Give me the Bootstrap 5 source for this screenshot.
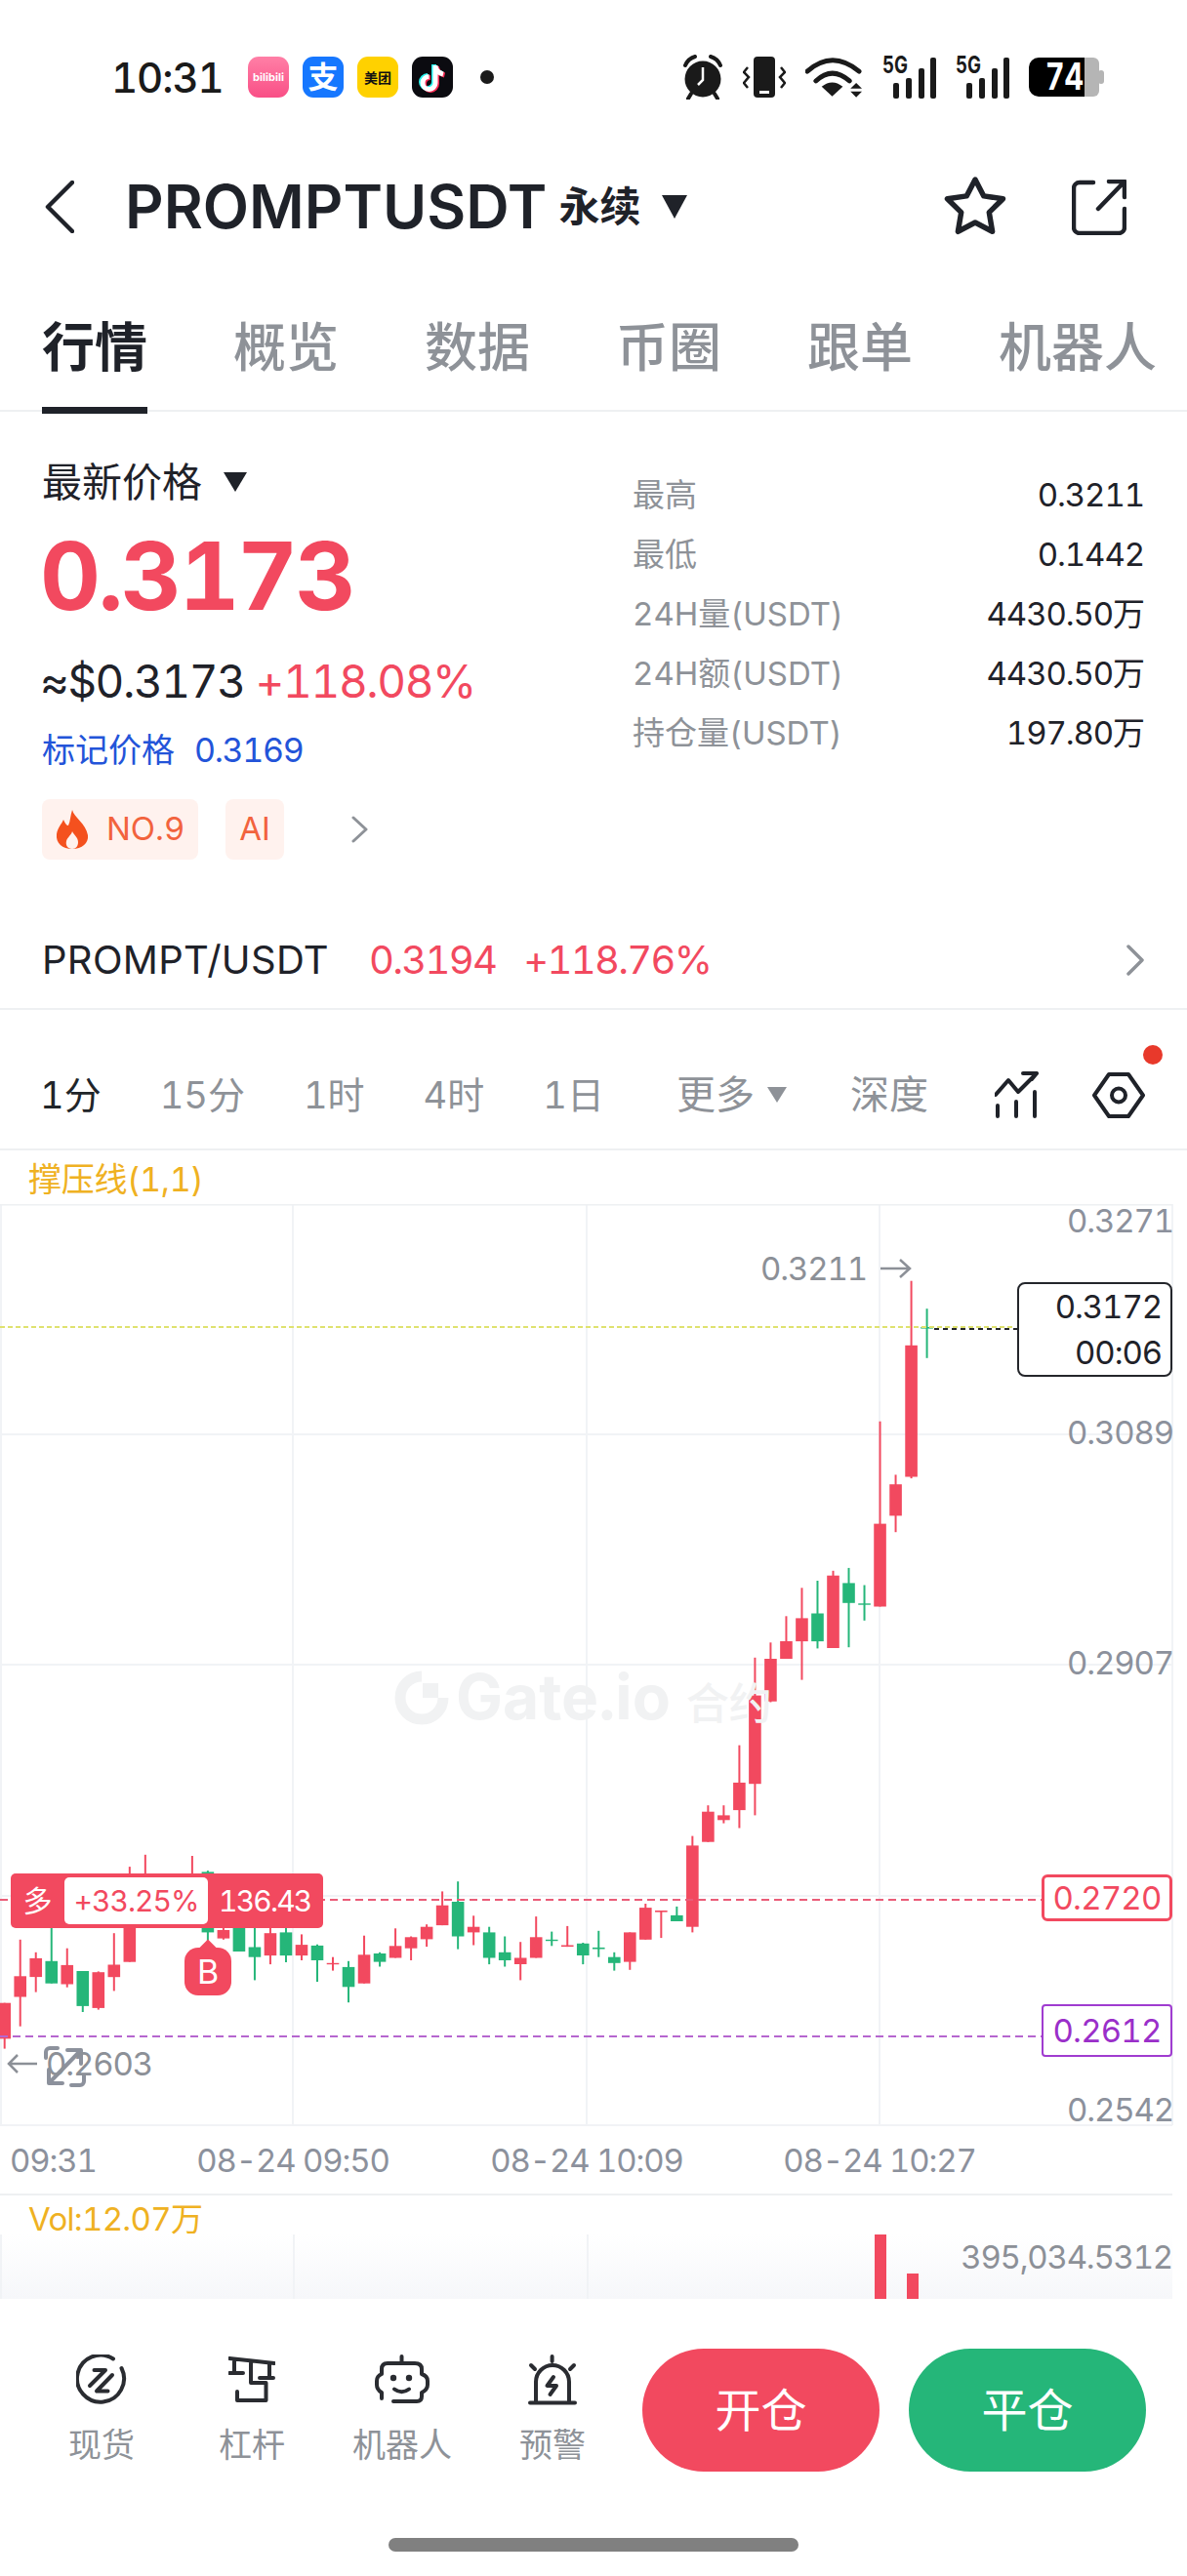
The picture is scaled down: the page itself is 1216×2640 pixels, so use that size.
<!DOCTYPE html>
<html lang="zh">
<head>
  <meta charset="UTF-8" />
  <meta name="viewport" content="width=device-width, initial-scale=1.0" />
  <title>PROMPTUSDT</title>
  <link href="https://cdn.jsdelivr.net/npm/bootstrap@5.3.0/dist/css/bootstrap.min.css" rel="stylesheet"/>
  <style>
    body {
      margin: 0;
      background: #fff;
      color: #1f2229;
      font-family: Inter, "Noto Sans CJK SC", sans-serif;
      font-variant-numeric: tabular-nums;
    }
    .phone { width: 1216px; height: 2640px; overflow: hidden; }

    /* status bar */
    .status-row { height: 158px; padding: 0 85px 0 114px; }
    .clock { font-size: 42px; font-weight: 500; color: #1a1a1a; width: 113px; margin-right: 27px; letter-spacing: -1.1px; }
    .app-list { gap: 14px; }
    .app-ico { width: 42px; height: 42px; border-radius: 11px; overflow: hidden; flex: none; }
    .app-bili { background: linear-gradient(#ff7fa6, #f94f86); color: #fff; font-size: 11px; font-weight: 700; }
    .app-ali { background: #1677ff; color: #fff; font-size: 31px; font-weight: 700; }
    .app-mt { background: #ffd100; color: #111; font-size: 14px; font-weight: 700; }
    .app-tt { background: #0b0b10; }
    .note-dot { width: 14px; height: 14px; border-radius: 50%; background: #1a1a1a; margin-left: 28px; }
    .status-right { gap: 20px; }

    /* header */
    .head-row { height: 108px; padding: 0 62px 0 46px; }
    .coin-title { font-size: 61.5px; font-weight: 600; margin-left: 52px; line-height: 1; }
    .coin-kind { font-size: 42px; font-weight: 700; margin-left: 12px; line-height: 1; }
    .tri-down { width: 0; height: 0; border-style: solid; border-color: #1f2229 transparent transparent transparent; }
    .tri-head { border-width: 24px 13px 0 13px; margin-left: 22px; }
    .head-tools { gap: 66px; }

    /* tabs */
    .tab-row { height: 156px; padding-left: 43px; gap: 88px; border-bottom: 2px solid #eef0f2; flex-wrap: nowrap; white-space: nowrap; }
    .tab-item { font-size: 54px; line-height: 54px; padding-top: 64px; color: #8e9298; font-weight: 500; height: 156px; position: relative; }
    .tab-item.on { color: #1f2229; font-weight: 700; }
    .tab-item.on::after { content: ""; position: absolute; left: 0; right: 0; bottom: -2px; height: 7px; background: #1f2229; }

    /* market block */
    .ticker { padding-left: 43px; height: 459px; }
    .side-left { width: 605px; padding-top: 50px; }
    .price-label { font-size: 41px; line-height: 44px; }
    .tri-label { border-width: 20px 12px 0 12px; margin-left: 22px; }
    .last-price { font-size: 96px; font-weight: 700; line-height: 100px; color: #f2495f; margin: 24px 0 0 -2px; letter-spacing: -2.5px; }
    .fiat-line { font-size: 46px; line-height: 60px; margin: 28px 0 0 -2px; letter-spacing: -1.4px; }
    .txt-up { color: #f2495f; }
    .mark-line { font-size: 34px; line-height: 40px; color: #2354d9; margin-top: 21px; }
    .mark-val { letter-spacing: -1.3px; margin-left: 20px; }
    .tag-line { margin-top: 30px; }
    .hot-tag { height: 62px; background: #fff2ee; color: #f2633d; font-size: 33px; border-radius: 8px; }
    .tag-no { width: 160px; padding-left: 13px; gap: 17px; }
    .tag-ai { width: 60px; margin-left: 28px; }
    .tag-more { margin-left: 68px; }
    .side-right { width: 524px; padding-top: 55px; }
    .stat-line { height: 61px; font-size: 33px; }
    .stat-line span:first-child { color: #8e9298; }
    .stat-line span:last-child { letter-spacing: -1.1px; }
    .spot-row { height: 154px; padding: 53px 43px 0 43px; border-bottom: 2px solid #eef0f2; font-size: 40px; }
    .spot-name { letter-spacing: .3px; }
    .spot-val { letter-spacing: -1.7px; margin-left: 41px; }
    .spot-pct { letter-spacing: -1.7px; margin-left: 28px; }

    /* period row */
    .period-row { height: 142px; padding: 32px 43px 0 41px; font-size: 40px; color: #8e9298; }
    .period-left { gap: 60px; font-size: 38px; }
    .period-depth { margin-left: 65px; }
    .period-chart { margin-left: 68px; }
    .period-hex { margin-left: 55px; }
    .tri-more { border-width: 16px 10px 0 10px; border-top-color: #8e9298; margin-left: 13px; }
    .red-dot { position: absolute; width: 20px; height: 20px; border-radius: 50%; background: #e8392b; top: -28px; right: -18px; }
    .indi-row { height: 57px; border-top: 2px solid #eef0f2; padding-left: 29px; font-size: 34px; color: #efb122; line-height: 60px; letter-spacing: -.3px; }

    /* chart */
    .chart-box { height: 1014px; position: relative; }
    .chart-box svg { position: absolute; left: 0; top: 0; }
    .ax-label { position: absolute; color: #8c919c; font-size: 33px; line-height: 40px; white-space: nowrap; letter-spacing: -1.15px; }
    .ax-price { right: 14px; }
    .p1 { top: -3px; }
    .p2 { top: 214px; }
    .p3 { top: 450px; }
    .p4 { top: 908px; }
    .high-mark { right: 328px; top: 46px; color: #8c9097; }
    .low-mark { right: 1060px; top: 861px; color: #8c9097; }
    .t1 { left: 10px; top: 960px; }
    .t2 { left: 300px; top: 960px; transform: translateX(-50%); }
    .t3 { left: 601px; top: 960px; transform: translateX(-50%); }
    .t4 { left: 901px; top: 960px; transform: translateX(-50%); }
    .now-box { position: absolute; left: 1042px; top: 80px; width: 159px; height: 97px; border: 2px solid #24262b; border-radius: 8px; background: #fff; color: #1f2229; font-size: 33px; line-height: 47px; text-align: right; padding: 0 9px 0 0; letter-spacing: -1.1px; }
    .watermark { position: absolute; left: 467px; top: 470px; color: #f1f2f3; font-size: 64px; font-weight: 700; line-height: 70px; white-space: nowrap; }
    .wm-cn { font-size: 44px; font-weight: 500; margin-left: 4px; }
    .pos-tag { position: absolute; left: 11px; top: 686px; width: 320px; height: 56px; background: #f2495f; border-radius: 5px; color: #fff; font-size: 30px; }
    .pos-side { width: 55px; text-align: center; }
    .pos-pnl { width: 147px; height: 48px; background: #fff; color: #f2495f; border-radius: 5px; text-align: center; line-height: 48px; letter-spacing: -1px; }
    .pos-qty { margin-left: 11px; letter-spacing: -1.8px; }
    .buy-mark { position: absolute; left: 189px; top: 762px; width: 48px; height: 49px; background: #f2495f; color: #fff; border-radius: 14px; font-size: 34px; }
    .buy-mark::before { content: ""; position: absolute; left: 18px; top: -6px; width: 12px; height: 12px; background: #f2495f; transform: rotate(45deg); }
    .line-box { position: absolute; left: 1067px; width: 134px; background: #fff; text-align: center; font-size: 33px; letter-spacing: -.8px; }
    .box-red { top: 687px; height: 48px; line-height: 42px; border: 3px solid #f2495f; border-radius: 6px; color: #f2495f; }
    .box-pur { top: 820px; height: 54px; line-height: 50px; border: 2px solid #a03cd0; border-radius: 4px; color: #9a2fc9; }

    /* volume */
    .vol-box { height: 108px; position: relative; border-top: 2px solid #eef0f2; width: 1201px; }
    .vol-label { padding: 9px 0 0 29px; font-size: 33px; line-height: 30px; color: #efb122; letter-spacing: -.7px; }
    .vol-fill { position: absolute; left: 0; right: 0; top: 40px; bottom: 0; background: linear-gradient(#fff, #f6f7fa); border-left: 2px solid #f1f3f6; }
    .vol-grid { position: absolute; top: 0; bottom: 0; width: 2px; background: #f1f3f6; }
    .g1 { left: 298px; }
    .g2 { left: 599px; }
    .vol-bar { position: absolute; bottom: 0; width: 12px; background: #f2495f; }
    .v1 { left: 894px; height: 66px; }
    .v2 { left: 927px; height: 26px; }
    .vol-max { position: absolute; right: 0; top: 46px; font-size: 33px; line-height: 34px; color: #8c9097; letter-spacing: -1.25px; }

    /* footer */
    .foot-row { padding: 51px 42px 0 27px; }
    .foot-item { width: 154px; padding-top: 6px; color: #8e9298; font-size: 34px; }
    .foot-ico { height: 52px; }
    .foot-txt { margin-top: 21px; line-height: 40px; }
    .trade-btn { width: 243px; height: 126px; border: 0; color: #fff; font-size: 47px; padding: 0; }
    .trade-btn:hover { color: #fff; }
    .btn-open { background: #f2495f; margin-left: 15px; }
    .btn-open:hover { background: #f2495f; }
    .btn-close-pos { background: #25b679; margin-left: 30px; }
    .btn-close-pos:hover { background: #25b679; }
    .home-pill { width: 420px; height: 14px; border-radius: 7px; background: #808080; margin-top: 68px; }
  </style>
</head>
<body>
<div class="phone">

  <!-- status bar -->
  <div class="status-row d-flex align-items-center">
    <div class="clock">10:31</div>
    <div class="app-list d-flex align-items-center">
      <div class="app-ico app-bili d-flex align-items-center justify-content-center">bilibili</div>
      <div class="app-ico app-ali d-flex align-items-center justify-content-center">支</div>
      <div class="app-ico app-mt d-flex align-items-center justify-content-center">美团</div>
      <div class="app-ico app-tt">
        <svg width="42" height="42" viewBox="0 0 42 42" fill="none" stroke-width="5">
          <path d="M24 9V27a6.5 6.5 0 1 1-6.5-6.5M24 10c1 5 4 7 8 8" stroke="#25f4ee" transform="translate(-1.5 -1)"/>
          <path d="M24 9V27a6.5 6.5 0 1 1-6.5-6.5M24 10c1 5 4 7 8 8" stroke="#fe2c55" transform="translate(1.5 1)"/>
          <path d="M24 9V27a6.5 6.5 0 1 1-6.5-6.5M24 10c1 5 4 7 8 8" stroke="#fff"/>
        </svg>
      </div>
    </div>
    <div class="note-dot"></div>
    <div class="status-right d-flex align-items-center ms-auto">
      <svg width="42" height="46" viewBox="0 0 42 46" fill="none" stroke="#1a1a1a">
        <circle cx="21" cy="25" r="18.5" fill="#1a1a1a" stroke="none"/>
        <path d="M3 11Q6 4 13 2M39 11Q36 4 29 2M9 40l-3 5M33 40l3 5" stroke-width="4" stroke-linecap="round"/>
        <path d="M21 13V26L16 31" stroke="#fff" stroke-width="2.5"/>
      </svg>
      <svg width="44" height="42" viewBox="0 0 44 42" fill="none" stroke="#1a1a1a">
        <rect x="11" y="0" width="22" height="42" rx="4" fill="#1a1a1a" stroke="none"/>
        <rect x="17" y="35" width="10" height="3" fill="#fff" stroke="none"/>
        <path d="M5 11L1 16L6 21L1 27L5 32M39 11L43 16L38 21L43 27L39 32" stroke-width="2.5"/>
      </svg>
      <svg width="59" height="42" viewBox="0 0 60 42" fill="#1a1a1a" stroke="#1a1a1a">
        <path d="M2 15Q28-8 56 15M11 25Q28 9 46 25" fill="none" stroke-width="5" stroke-linecap="round"/>
        <path d="M17 31Q28 22 39 31L28 41Z" stroke="none"/>
        <path d="M53 27l6 6H47ZM47 36H59l-6 6Z" stroke="none"/>
      </svg>
      <svg width="55" height="55" viewBox="0 -6 55 55" fill="#1a1a1a">
        <text x="0" y="17" font-size="24" font-weight="700" textLength="26" lengthAdjust="spacingAndGlyphs">5G</text>
        <rect x="11" y="27" width="6" height="16" rx="2"/><rect x="24" y="22" width="6" height="21" rx="2"/>
        <rect x="37" y="12" width="6" height="31" rx="2"/><rect x="49" y="1" width="6" height="42" rx="2"/>
      </svg>
      <svg width="55" height="55" viewBox="0 -6 55 55" fill="#1a1a1a">
        <text x="0" y="17" font-size="24" font-weight="700" textLength="26" lengthAdjust="spacingAndGlyphs">5G</text>
        <rect x="11" y="27" width="6" height="16" rx="2"/><rect x="24" y="22" width="6" height="21" rx="2"/>
        <rect x="37" y="12" width="6" height="31" rx="2"/><rect x="49" y="1" width="6" height="42" rx="2"/>
      </svg>
      <svg width="77" height="56" viewBox="0 -8 77 56">
        <path d="M10 0H57V40H10A10 10 0 0 1 0 30V10A10 10 0 0 1 10 0Z" fill="#000"/>
        <path d="M57 0H66A6 6 0 0 1 72 6V34A6 6 0 0 1 66 40H57Z" fill="#b5b5b5"/>
        <rect x="71" y="13" width="6" height="14" rx="3" fill="#b5b5b5"/>
        <text x="17" y="33" font-size="38" font-weight="700" fill="#fff" textLength="39" lengthAdjust="spacingAndGlyphs">74</text>
      </svg>
    </div>
  </div>

  <!-- coin header -->
  <div class="head-row d-flex align-items-center">
    <svg width="30" height="54" viewBox="0 0 30 54" fill="none" stroke="#1f2229" stroke-width="4.5" stroke-linecap="round" stroke-linejoin="round"><path d="M28 2L3 27L28 52"/></svg>
    <span class="coin-title">PROMPTUSDT</span>
    <span class="coin-kind">永续</span>
    <span class="tri-down tri-head"></span>
    <div class="head-tools d-flex align-items-center ms-auto">
      <svg width="66" height="62" viewBox="0 0 66 62" fill="none" stroke="#1f2229" stroke-width="5.5" stroke-linejoin="round"><path d="M33 3L41.8 19.9L61.5 22.7L47.3 36.6L50.6 56.3L33 47L15.4 56.3L18.7 36.6L4.5 22.7L24.2 19.9Z"/></svg>
      <svg width="56" height="57" viewBox="0 0 56 57" fill="none" stroke="#1f2229" stroke-width="4.5" stroke-linecap="round" stroke-linejoin="round"><path d="M22 3H8A6 6 0 0 0 2 9V49A6 6 0 0 0 8 55H48A6 6 0 0 0 54 49V30M27 30L54 2M38 2H54V18"/></svg>
    </div>
  </div>

  <!-- tabs -->
  <div class="nav tab-row">
    <div class="tab-item on">行情</div>
    <div class="tab-item">概览</div>
    <div class="tab-item">数据</div>
    <div class="tab-item">币圈</div>
    <div class="tab-item">跟单</div>
    <div class="tab-item">机器人</div>
  </div>

  <!-- ticker -->
  <div class="ticker d-flex">
    <div class="side-left">
      <div class="price-label d-flex align-items-center">最新价格<span class="tri-down tri-label"></span></div>
      <div class="last-price">0.3173</div>
      <div class="fiat-line">≈$0.3173 <span class="txt-up">+118.08%</span></div>
      <div class="mark-line">标记价格<span class="mark-val">0.3169</span></div>
      <div class="tag-line d-flex align-items-center">
        <div class="hot-tag tag-no d-flex align-items-center">
          <svg width="36" height="40" viewBox="0 0 36 40"><path d="M18 0C20 8 32 14 34 26C35 34 28 40 18 40C8 40 1 34 2 25C3 18 7 15 9 10C11 14 12 16 14 16C16 12 16 6 18 0Z" fill="#f4511e"/><path d="M18 40C13 40 11 36 12 32C13 28 17 26 18 22C20 26 24 28 24 33C24 37 22 40 18 40Z" fill="#fff2ee"/></svg>
          <span>NO.9</span>
        </div>
        <div class="hot-tag tag-ai d-flex align-items-center justify-content-center">AI</div>
        <svg class="tag-more" width="19" height="28" viewBox="0 0 19 28" fill="none" stroke="#8e9298" stroke-width="3" stroke-linecap="round" stroke-linejoin="round"><path d="M3 2L16 14L3 26"/></svg>
      </div>
    </div>
    <div class="side-right">
      <div class="stat-line d-flex justify-content-between align-items-center"><span>最高</span><span>0.3211</span></div>
      <div class="stat-line d-flex justify-content-between align-items-center"><span>最低</span><span>0.1442</span></div>
      <div class="stat-line d-flex justify-content-between align-items-center"><span>24H量(USDT)</span><span>4430.50万</span></div>
      <div class="stat-line d-flex justify-content-between align-items-center"><span>24H额(USDT)</span><span>4430.50万</span></div>
      <div class="stat-line d-flex justify-content-between align-items-center"><span>持仓量(USDT)</span><span>197.80万</span></div>
    </div>
  </div>

  <div class="spot-row d-flex align-items-center">
    <span class="spot-name">PROMPT/USDT</span>
    <span class="txt-up spot-val">0.3194</span>
    <span class="txt-up spot-pct">+118.76%</span>
    <svg class="ms-auto" width="20" height="32" viewBox="0 0 20 32" fill="none" stroke="#8e9298" stroke-width="3.5" stroke-linecap="round" stroke-linejoin="round"><path d="M3 2L17 16L3 30"/></svg>
  </div>

  <!-- periods -->
  <div class="period-row d-flex align-items-center">
    <div class="period-left d-flex">
      <span class="text-dark">1分</span><span>15分</span><span>1时</span><span>4时</span><span>1日</span>
    </div>
    <div class="d-flex align-items-center ms-auto">
      <span class="d-flex align-items-center">更多<span class="tri-down tri-more"></span></span>
      <span class="period-depth">深度</span>
      <svg class="period-chart" width="45" height="48" viewBox="0 0 45 48" fill="none" stroke="#1f2229" stroke-width="4" stroke-linecap="round" stroke-linejoin="round"><path d="M1 24L14 9L24 21L43 2M29 2H43L38 8M3 35V46M22 31V46M41 21V46"/></svg>
      <span class="period-hex position-relative d-inline-flex">
        <svg width="54" height="47" viewBox="0 0 54 47" fill="none" stroke="#1f2229" stroke-width="4" stroke-linejoin="round"><path d="M17 2H37L52 23.500L37 45H17L2 23.500Z"/><circle cx="27" cy="23.500" r="7"/></svg>
        <span class="red-dot"></span>
      </span>
    </div>
  </div>

  <div class="indi-row">撑压线(1,1)</div>

  <!-- kline chart -->
  <div class="chart-box">
    <svg id="kline" width="1216" height="1014" viewBox="0 0 1216 1014"></svg>
    <div class="watermark">Gate.io<span class="wm-cn"> 合约</span></div>

    <div class="ax-label ax-price p1">0.3271</div>
    <div class="ax-label ax-price p2">0.3089</div>
    <div class="ax-label ax-price p3">0.2907</div>
    <div class="ax-label ax-price p4">0.2542</div>
    <div class="ax-label high-mark">0.3211</div>
    <div class="ax-label low-mark">0.2603</div>
    <div class="ax-label t1">09:31</div>
    <div class="ax-label t2">08-24 09:50</div>
    <div class="ax-label t3">08-24 10:09</div>
    <div class="ax-label t4">08-24 10:27</div>

    <div class="now-box">0.3172<br>00:06</div>
    <div class="pos-tag d-flex align-items-center">
      <span class="pos-side">多</span>
      <span class="pos-pnl">+33.25%</span>
      <span class="pos-qty">136.43</span>
    </div>
    <div class="buy-mark d-flex align-items-center justify-content-center">B</div>
    <div class="line-box box-red">0.2720</div>
    <div class="line-box box-pur">0.2612</div>
  </div>

  <!-- volume -->
  <div class="vol-box">
    <div class="vol-label">Vol:12.07万</div>
    <div class="vol-fill">
      <div class="vol-grid g1"></div>
      <div class="vol-grid g2"></div>
      <div class="vol-bar v1"></div>
      <div class="vol-bar v2"></div>
    </div>
    <div class="vol-max">395,034.5312</div>
  </div>

  <!-- footer -->
  <div class="foot-row d-flex align-items-start">
    <div class="foot-item d-flex flex-column align-items-center">
      <svg class="foot-ico" width="52" height="52" viewBox="0 0 52 52" fill="none" stroke="#2a2c31" stroke-width="4" stroke-linecap="round" stroke-linejoin="round"><path d="M38 4.500A24 24 0 1 0 46.500 14"/><path d="M18.500 16H30L14 32M37 21L21 37.500H32.500"/></svg>
      <div class="foot-txt">现货</div>
    </div>
    <div class="foot-item d-flex flex-column align-items-center">
      <svg class="foot-ico" width="48" height="52" viewBox="0 0 48 52" fill="none" stroke="#2a2c31" stroke-width="4" stroke-linecap="round" stroke-linejoin="round"><path d="M1 4L47 9M6 6V19M1 19H15M42 9V24M32 24H46M23 7V29H38.500V47H9V38"/></svg>
      <div class="foot-txt">杠杆</div>
    </div>
    <div class="foot-item d-flex flex-column align-items-center">
      <svg class="foot-ico" width="56" height="52" viewBox="0 0 56 50" fill="none" stroke="#2a2c31" stroke-width="4" stroke-linecap="round" stroke-linejoin="round"><path d="M27.500 1V8M7 44V38Q2 35 2 30V26Q2 21 7 19V14Q7 8 13 8H41Q48 8 48 14V19Q54 21 54 26V30Q54 35 48 38V42Q48 47 43 47H19M20 34.500Q27.500 40 35 34.500"/><circle cx="19" cy="23" r="3.200" fill="#2a2c31" stroke="none"/><circle cx="35" cy="23" r="3.200" fill="#2a2c31" stroke="none"/></svg>
      <div class="foot-txt">机器人</div>
    </div>
    <div class="foot-item d-flex flex-column align-items-center">
      <svg class="foot-ico" width="50" height="52" viewBox="0 0 50 52" fill="none" stroke="#2a2c31" stroke-width="4" stroke-linecap="round" stroke-linejoin="round"><path d="M24.600 2V7M3 11L7 15M47 11L43 15M8 48V28A17 17 0 0 1 42 28V48M2 49.500H48M26 23L19.500 32H29L22.500 41"/></svg>
      <div class="foot-txt">预警</div>
    </div>
    <button class="btn trade-btn btn-open rounded-pill">开仓</button>
    <button class="btn trade-btn btn-close-pos rounded-pill">平仓</button>
  </div>
  <div class="home-pill mx-auto"></div>
</div>

<script>
  const RED = "#f2495f", GREEN = "#25b679";

  // [colour, wickTop, wickBottom, bodyTop, bodyBottom], measured at 2.45x from page y 1560
  const candles = [
    ["r",1207,1322,1207,1297],["r",1048,1266,1140,1192],["r",1080,1180,1095,1142],["g",990,1158,1102,1158],
    ["r",1070,1168,1112,1160],["g",1127,1230,1127,1215],["r",1128,1224,1130,1220],["r",1032,1177,1111,1142],
    ["r",865,1104,950,1104],["r",835,1000,900,1000],["r",900,1000,920,1000],["r",900,1000,920,1000],
    ["r",838,1000,920,1000],["g",875,1060,878,1030],["r",1000,1048,1024,1045],["g",960,1078,980,1078],
    ["g",1000,1150,1067,1092],["r",1000,1110,1032,1088],["g",1000,1105,1030,1088],["r",1035,1100,1061,1088],
    ["g",1060,1154,1063,1100],["r",1092,1126,1107,1110],["g",1102,1206,1117,1167],["r",1038,1158,1086,1158],
    ["g",1080,1116,1083,1104],["r",1020,1094,1064,1094],["r",1040,1100,1042,1070],["r",1010,1066,1016,1047],
    ["r",927,1012,962,1012],["g",902,1072,953,1040],["r",988,1062,1016,1030],["g",1016,1110,1030,1094],
    ["g",1040,1116,1080,1100],["r",1054,1150,1094,1110],["r",990,1094,1042,1094],["g",1028,1064,1048,1050],
    ["r",1014,1066,1062,1066],["g",1056,1110,1058,1088],["g",1026,1092,1068,1072],["g",1080,1126,1092,1107],
    ["r",1030,1124,1030,1104],["r",958,1048,968,1048],["r",975,1044,975,979],["g",965,1002,987,1002],
    ["r",788,1030,812,1016],["r",711,803,727,803],["r",711,756,736,748],["r",560,768,654,723],
    ["r",340,736,435,657],["r",302,452,343,450],["r",236,343,299,343],["r",165,396,241,299],
    ["g",147,317,229,299],["r",122,316,134,316],["g",115,314,153,203],["g",158,247,204,207],
    ["r",-253,212,4,212],["r",-119,25,-95,-16],["r",-606,-110,-444,-114],["g",-536,-412,-490,-486]
  ];

  const toY = z => (1560 + z / 2.45 - 1234).toFixed(1);
  let out = "";

  // grid
  [236, 472, 709, 944].forEach(y => { out += `<line x1="0" x2="1201" y1="${y}" y2="${y}" stroke="#f1f3f6" stroke-width="2"/>`; });
  [1, 300, 601, 901, 1201].forEach(x => { out += `<line x1="${x}" x2="${x}" y1="0" y2="944" stroke="#f1f3f6" stroke-width="2"/>`; });
  out += `<line x1="0" x2="1201" y1="0" y2="0" stroke="#eef0f2" stroke-width="3"/>`;

  // watermark logo
  out += `<path d="M432 484A22 22 0 1 0 454 506" fill="none" stroke="#f1f2f3" stroke-width="11"/><rect x="433" y="491" width="16" height="15" fill="#f1f2f3"/>`;

  candles.forEach((c, i) => {
    const color = c[0] === "r" ? RED : GREEN;
    const x = 4.7 + 16.015 * i;
    out += `<line x1="${x}" x2="${x}" y1="${toY(c[1])}" y2="${toY(c[2])}" stroke="${color}" stroke-width="2"/>`;
    out += `<rect x="${x - 6.3}" y="${toY(c[3])}" width="12.6" height="${Math.max(1.4, (c[4] - c[3]) / 2.45).toFixed(1)}" fill="${color}"/>`;
  });

  // level lines
  out += `<line x1="0" x2="1040" y1="126" y2="126" stroke="#dfe26f" stroke-width="2" stroke-dasharray="5 3"/>`;
  out += `<line x1="957" x2="1042" y1="128" y2="128" stroke="#24262b" stroke-width="2" stroke-dasharray="5 4"/>`;
  out += `<line x1="0" x2="1068" y1="713" y2="713" stroke="#ea5c78" stroke-width="2" stroke-dasharray="8 5"/>`;
  out += `<line x1="0" x2="1068" y1="853" y2="853" stroke="#b566cf" stroke-width="2" stroke-dasharray="8 5"/>`;

  // high arrow, low arrow, fullscreen icon
  out += `<path d="M902 66H932M922 57L932 66L922 75" fill="none" stroke="#8c9097" stroke-width="2.500"/>`;
  out += `<path d="M38 881H9M18 872L9 881L18 890" fill="none" stroke="#8c9097" stroke-width="2.500"/>`;
  out += `<g transform="translate(45 863)" fill="none" stroke="#8c919c" stroke-width="4" stroke-linecap="round" stroke-linejoin="round"><path d="M2 12V6A4 4 0 0 1 6 2H14M41 30V36A4 4 0 0 1 37 40H28M6 37L37 5M24 4H38V18M5 24V38H19"/></g>`;

  document.getElementById("kline").innerHTML = out;
</script>
<script src="https://cdn.jsdelivr.net/npm/bootstrap@5.3.0/dist/js/bootstrap.bundle.min.js"></script>
</body>
</html>
